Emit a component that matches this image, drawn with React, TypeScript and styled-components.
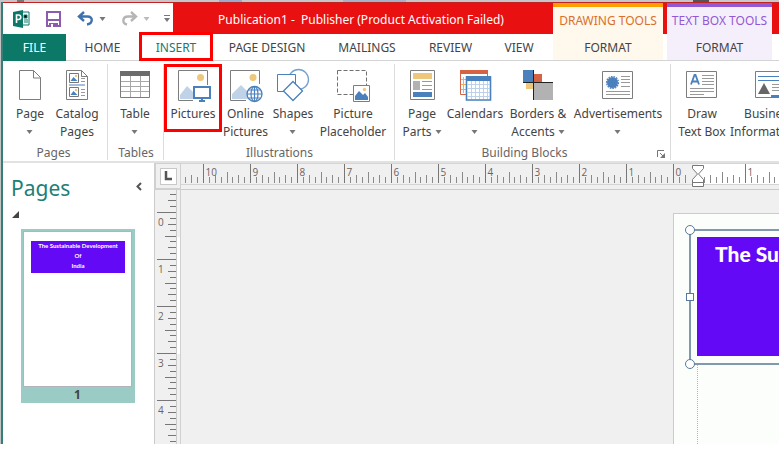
import React from "react";
import styled, { createGlobalStyle, css } from "styled-components";

const GlobalStyle = createGlobalStyle`
  * { box-sizing: border-box; }
  body { margin: 0; background: #fff; overflow: hidden; }
  button { border: 0; padding: 0; background: none; font: inherit; color: inherit; cursor: pointer; }
  svg { display: block; flex: none; }
`;

const Window = styled.div`
  display: flex;
  flex-direction: column;
  height: calc(100vh - 13px);
  margin-right: 2px;
  overflow: hidden;
  color: #444;
  font: 12px/18px "Noto Sans", "Open Sans", sans-serif;
  border-left: 1px solid #c3c3c3;
`;

const DesktopStrip = styled.div`
  flex: none;
  height: 2px;
  background: linear-gradient(90deg, #c6c6c8 0 2%, #777 2% 3%, #c6c6c8 3% 28%, #9aabc9 28% 31%, #c6c6c8 31% 44%, #a6b2c7 44% 52%, #c6c6c8 52% 89%, #555 89% 91%, #c9c9c9 91%);
`;

const Frame = styled.div`
  display: flex;
  flex-direction: column;
  flex: 1;
  min-height: 0;
  border-left: 2px solid #348078;
`;

const Header = styled.header`
  display: flex;
  flex: none;
  height: 59px;
  padding-right: 7px;
  border-bottom: 1px solid #d4d4d4;
  border-top: 1px solid #c32222;
  background: linear-gradient(#e81010 0 31px, #fff 31px);
`;

const HeaderMain = styled.div`
  display: flex;
  flex-direction: column;
  flex: 1;
  min-width: 0;
`;

const TitleBar = styled.div`
  display: flex;
  height: 31px;
`;

const QuickAccess = styled.div`
  display: flex;
  align-items: center;
  flex: none;
  width: 170px;
  padding-left: 9px;
  background: #fff;
`;

const QuickButton = styled.button<{ $w: number }>`
  display: flex;
  align-items: center;
  width: ${(p) => p.$w}px;
`;

const Title = styled.h1`
  flex: 1;
  margin: 0;
  padding: 1px 4px 0 0;
  color: #fff;
  font-size: 12px;
  font-weight: 400;
  line-height: 31px;
  text-align: center;
  white-space: pre;
`;

const Tabs = styled.nav`
  display: flex;
  height: 27px;
`;

const Tab = styled.button<{ $w: number; $kind?: "file" | "active" }>`
  position: relative;
  flex: none;
  width: ${(p) => p.$w}px;
  line-height: 27px;
  white-space: nowrap;
  ${(p) => p.$kind === "file" && css`background: #0b7868; color: #fff;`}
  ${(p) => p.$kind === "active" && css`
    color: #1b7a6d;
    &::after {
      content: "";
      position: absolute;
      inset: -2px 0 0;
      border: 3px solid #fe0000;
    }
  `}
`;

const ContextTabs = styled.div`
  display: flex;
  gap: 4px;
`;

const ContextTab = styled.button<{ $w: number; $accent: string; $bg: string }>`
  display: flex;
  flex-direction: column;
  align-items: center;
  width: ${(p) => p.$w}px;
  border-top: 4px solid ${(p) => p.$accent};
  background: ${(p) => p.$bg};
  line-height: 27px;
  white-space: nowrap;
`;

const ContextName = styled.span<{ $color: string }>`
  height: 27px;
  color: ${(p) => p.$color};
`;

const Ribbon = styled.section`
  display: flex;
  flex: none;
  height: 102px;
  padding-top: 3px;
  background: #fff;
  border-bottom: 2px solid #e2e2e2;
`;

const Group = styled.div<{ $w: number; $pad: number }>`
  position: relative;
  display: flex;
  flex-direction: column;
  justify-content: space-between;
  flex: none;
  width: ${(p) => p.$w}px;
  height: 96px;
  border-right: 1px solid #dcdcdc;
  padding-left: ${(p) => p.$pad}px;
`;

const GroupTools = styled.div`
  display: flex;
`;

const GroupName = styled.div<{ $inset: number }>`
  padding-right: ${(p) => p.$inset}px;
  color: #666;
  text-align: center;
  line-height: 14px;
`;

const Launcher = styled.button`
  position: absolute;
  right: 4px;
  bottom: 1px;
`;

const Tool = styled.button<{ $w: number; $marked?: boolean }>`
  position: relative;
  display: flex;
  flex-direction: column;
  align-items: center;
  flex: none;
  width: ${(p) => p.$w}px;
  padding-top: 5px;
  white-space: nowrap;
  ${(p) => p.$marked && css`
    &::after {
      content: "";
      position: absolute;
      inset: 0 -1px 9px;
      border: 3px solid #fe0000;
    }
  `}
`;

const ToolLabel = styled.span`
  display: flex;
  flex-direction: column;
  align-items: center;
  padding-top: 4px;
  height: 40px;
`;

const ToolLine = styled.span`
  display: flex;
  align-items: center;
  gap: 3px;
  height: 18px;
`;

const Workspace = styled.main`
  display: flex;
  flex: 1;
  min-height: 0;
  background: #f0f0f0;
`;

const PagesPanel = styled.aside`
  flex: none;
  width: 151px;
  background: #fff;
  padding: 11px 0 0 8px;
`;

const PanelHeading = styled.div`
  display: flex;
  justify-content: space-between;
  height: 36px;
  padding-right: 12px;
`;

const PanelTitle = styled.h2`
  margin: 0;
  color: #218073;
  font-size: 21px;
  font-weight: 400;
  line-height: 28px;
`;

const Thumb = styled.button`
  display: flex;
  flex-direction: column;
  width: 114px;
  height: 174px;
  margin: 11px 0 0 10px;
  padding: 2px 3px 0 2px;
  background: #9bcbc5;
`;

const ThumbPage = styled.span`
  display: block;
  width: 100%;
  height: 156px;
  padding: 9px 6px 0 7px;
  border: 1px solid #b1b3bd;
  background: #fff;
`;

const ThumbBanner = styled.span`
  display: block;
  height: 32px;
  background: #6409f5;
  color: #fff;
  font: 700 6px/10px Lato, sans-serif;
  text-align: center;
  white-space: pre-line;
`;

const ThumbNumber = styled.span`
  width: 100%;
  line-height: 16px;
  font-weight: 700;
  text-align: center;
`;

const Editor = styled.div`
  display: grid;
  grid-template: 27px 1fr / 27px 1fr;
  flex: 1;
  min-width: 0;
`;

const Corner = styled.button`
  display: grid;
  place-items: center;
  border: solid #d0d0d0;
  border-width: 1px 1px 2px 2px;
`;

const CornerFace = styled.span`
  display: grid;
  place-items: center;
  width: 17px;
  height: 17px;
  border: 1px solid #c8c8c8;
  background: #fff;
`;

const TopRuler = styled.div`
  overflow: hidden;
  border-bottom: 1px solid #cbcbcb;
`;

const SideRuler = styled.div`
  overflow: hidden;
  border-left: 1px solid #cbcbcb;
  border-right: 1px solid #d0d0d0;
`;

const Canvas = styled.div`
  display: flex;
  justify-content: flex-end;
  padding-top: 23px;
  overflow: hidden;
`;

const Sheet = styled.div`
  flex: none;
  width: 106px;
  padding: 15px 0 0 15px;
  border: solid #cbcbcb;
  border-width: 1px 0 0 1px;
  background: #fbfefa;
`;

const TextFrame = styled.div`
  position: relative;
  height: 136px;
  padding: 6px 0 8px 6px;
  border: 2px solid #8198ad;
  border-right: 0;
`;

const TextBanner = styled.div`
  height: 119px;
  padding: 4px 0 0 18px;
  overflow: hidden;
  background: #6409f5;
  color: #fff;
  font: 900 21px/26px Lato, sans-serif;
  white-space: nowrap;
`;

const Handle = styled.span<{ $top: string; $square?: boolean }>`
  position: absolute;
  left: ${(p) => (p.$square ? -5 : -6)}px;
  top: ${(p) => p.$top};
  width: ${(p) => (p.$square ? 8 : 10)}px;
  height: ${(p) => (p.$square ? 8 : 10)}px;
  border: 1px solid #58799a;
  border-radius: ${(p) => (p.$square ? 0 : 5)}px;
  background: #fff;
`;

const Guide = styled.div`
  height: 100%;
  margin-left: 8px;
  border-left: 1px dotted #8fc0ef;
`;

const Caret = ({ color = "#777" }: { color?: string }) => (
  <svg width="7" height="4" aria-hidden="true"><path d="M0.5 0h6L3.5 4z" fill={color} /></svg>
);

const Icon = ({ children }: { children: React.ReactNode }) => (
  <svg width="32" height="32" viewBox="0 0 32 32" fill="none" overflow="visible" aria-hidden="true">{children}</svg>
);

const grey = "#7d7d7d";
const blue = "#4a80bc";
const pale = "#c0d2e8";
const sun = "#edc87c";

const icons = {
  page: <Icon><path d="M5.500 1.500h14l7 7v22h-21zM19.500 1.500v7.500h7" fill="#fff" stroke={grey} /></Icon>,
  catalog: (
    <Icon>
      <path d="M5.500 1.500h15l6 6v23h-21zM20.500 1.500v6h6" fill="#fff" stroke={grey} />
      <path d="M8.500 4.500h9v9h-9zM8.500 18.500h9v9h-9z" stroke="#777" fill="#fff" />
      <path d="m9.500 12 3-4 4 4zM9.500 26l3-4 4 4z" fill={blue} />
      <circle cx="15" cy="7" r="1.200" fill={sun} /><circle cx="15" cy="21" r="1.200" fill={sun} />
      <path d="M8 16h16" stroke={blue} />
      <path d="M20 9.500h4M20 12.500h4M20 20.500h4M20 23.500h4M20 26.500h4" stroke="#999" />
    </Icon>
  ),
  table: (
    <Icon>
      <path d="M1.500 2.500h29v26h-29z" fill="#fff" stroke={grey} />
      <path d="M1 2h30v5H1z" fill="#6c6c6c" />
      <path d="M2 12.500h28M2 17.500h28M2 22.500h28M11.500 7v21M21.500 7v21" stroke="#a8a8a8" />
    </Icon>
  ),
  pictures: (
    <Icon>
      <path d="M30.500 16V1.500h-29v30H16" stroke={grey} />
      <path d="M3 30v-4l7-9 7 7v6z" fill={pale} />
      <circle cx="23.500" cy="8.500" r="3.500" fill={sun} />
      <path d="M17 18h16v11H17z" fill="#fff" stroke={blue} strokeWidth="2" />
      <path d="M25 29v3M22 32h6" stroke={blue} strokeWidth="2" />
    </Icon>
  ),
  online: (
    <Icon>
      <path d="M29.500 15V1.500h-29v30H16" stroke={grey} />
      <path d="M2 30v-5l9-9 8 8v6z" fill={pale} />
      <circle cx="23" cy="8.500" r="3.500" fill={sun} />
      <circle cx="24.500" cy="25" r="7.500" fill="#fff" stroke={blue} strokeWidth="1.300" />
      <ellipse cx="24.500" cy="25" rx="3.500" ry="7.500" stroke={blue} strokeWidth="1.200" />
      <path d="M24.500 17.500v15M17 25h15M18.500 21h12M18.500 29h12" stroke={blue} strokeWidth="1.200" />
    </Icon>
  ),
  shapes: (
    <Icon>
      <circle cx="21.500" cy="10.500" r="10" stroke="#74a1ce" strokeWidth="1.300" />
      <path d="M.500 5.500h18v17h-18z" fill="#fff" stroke={blue} />
      <path d="m16 12.500 9.500 9.500-9.500 9.500L6.500 22z" fill="#fff" stroke={blue} strokeWidth="1.300" />
    </Icon>
  ),
  placeholder: (
    <Icon>
      <path d="M.500 1.500h29v24h-29z" stroke="#707070" strokeDasharray="4 2" />
      <path d="M16.500 16.500h16v16h-16z" fill="#fff" stroke={grey} />
      <path d="M18 31v-4l4-5 4 4 2-2 3 4v3z" fill={blue} />
      <circle cx="27.500" cy="20.500" r="1.700" fill={sun} />
    </Icon>
  ),
  parts: (
    <Icon>
      <path d="M4.500 1.500h24v29h-24z" fill="#fff" stroke={grey} />
      <path d="M7 4h19v6H7z" fill={sun} />
      <path d="M7 12h7v9H7z" fill="#b2b2b2" />
      <path d="M16 12.500h10M16 16.500h10M16 20.500h10" stroke="#999" />
      <path d="M7 23h19v5H7z" fill={blue} />
    </Icon>
  ),
  calendars: (
    <Icon>
      <path d="M1.500 2v23.500h6M28.500 2v5" stroke="#d66244" />
      <path d="M1 1h28v4H1z" fill="#d66244" />
      <path d="M4.500 8v16M2 10.500h5M2 15.500h5M2 20.500h5" stroke="#e8b060" />
      <path d="M7.500 8h24v23h-24z" fill="#fff" stroke={blue} strokeWidth="1.600" />
      <path d="M7 7h25v5H7z" fill={blue} />
      <path d="M12.500 12v18M16.500 12v18M20.500 12v18M24.500 12v18M28.500 12v18M8 15.500h23M8 19.500h23M8 23.500h23M8 27.500h23" stroke="#bdd2ea" />
    </Icon>
  ),
  borders: (
    <Icon>
      <path d="M1 1h10v12H1z" fill={blue} /><path d="M12 5h8v8h-8z" fill="#d66244" />
      <path d="M4 14h7v6H4z" fill={sun} /><path d="M12 14h19v17H12z" fill="#b2b2b2" />
      <path d="M11.500 1v30M1 13.500h30" stroke="#222" />
    </Icon>
  ),
  ads: (
    <Icon>
      <path d="M.500 2.500h30v27h-30z" fill="#fff" stroke={grey} />
      <circle cx="10.500" cy="13.500" r="5.500" fill={blue} />
      <circle cx="10.500" cy="13.500" r="6" stroke={blue} strokeWidth="1.200" strokeDasharray="1.600 1" />
      <path d="M19 7.500h9M19 10.500h9M19 13.500h9M19 17.500h9M4 22.500h24M4 25.500h24" stroke="#999" />
    </Icon>
  ),
  textBox: (
    <Icon>
      <path d="M.500 2.500h30v26h-30z" fill="#fff" stroke={grey} />
      <path d="m5 15.500 3.500-9.500h1l3.500 9.500M6.500 12.500h5" stroke={blue} strokeWidth="1.800" />
      <path d="M16 6.500h12M16 9.500h12M16 12.500h12M16 15.500h12M4 19.500h24M4 22.500h24M4 25.500h14" stroke="#999" />
    </Icon>
  ),
  business: (
    <Icon>
      <path d="M2.500 2.500h29v26h-29z" fill="#fff" stroke={grey} />
      <path d="M5 7.500h26M5 11.500h26" stroke={blue} />
      <path d="m5 25 6-11 6 11z" fill="#666" />
      <path d="M19 15.500h12M19 18.500h12M19 21.500h12" stroke="#999" />
      <path d="M18 26h14v3H18z" fill={blue} />
    </Icon>
  ),
};

type ToolSpec = { icon: keyof typeof icons; lines: string[]; w: number; caret?: boolean; marked?: boolean };
type GroupSpec = { name: string; w: number; pad: number; inset: number; tools: ToolSpec[]; launcher?: boolean };

const groups: GroupSpec[] = [
  { name: "Pages", w: 105, pad: 5, inset: 8, tools: [
    { icon: "page", lines: ["Page", ""], w: 44, caret: true },
    { icon: "catalog", lines: ["Catalog", "Pages"], w: 50 },
  ] },
  { name: "Tables", w: 56, pad: 1, inset: 0, tools: [{ icon: "table", lines: ["Table", ""], w: 52, caret: true }] },
  { name: "Illustrations", w: 231, pad: 1, inset: 0, tools: [
    { icon: "pictures", lines: ["Pictures"], w: 56, marked: true },
    { icon: "online", lines: ["Online", "Pictures"], w: 49 },
    { icon: "shapes", lines: ["Shapes", ""], w: 46, caret: true },
    { icon: "placeholder", lines: ["Picture", "Placeholder"], w: 74 },
  ] },
  { name: "Building Blocks", w: 276, pad: 4, inset: 20, launcher: true, tools: [
    { icon: "parts", lines: ["Page", "Parts"], w: 46, caret: true },
    { icon: "calendars", lines: ["Calendars", ""], w: 60, caret: true },
    { icon: "borders", lines: ["Borders &", "Accents"], w: 66, caret: true },
    { icon: "ads", lines: ["Advertisements", ""], w: 94, caret: true },
  ] },
  { name: "", w: 240, pad: 4, inset: 0, tools: [
    { icon: "textBox", lines: ["Draw", "Text Box"], w: 54 },
    { icon: "business", lines: ["Business", "Information"], w: 80, caret: true },
  ] },
];

const tabs: { name: string; w: number; kind?: "file" | "active" }[] = [
  { name: "FILE", w: 63, kind: "file" },
  { name: "HOME", w: 73 },
  { name: "INSERT", w: 74, kind: "active" },
  { name: "PAGE DESIGN", w: 108 },
  { name: "MAILINGS", w: 92 },
  { name: "REVIEW", w: 75 },
  { name: "VIEW", w: 62 },
];

const INCH = 47;

/* Eighth-inch marks counted from an origin, each with its length. */
function marks(origin: number, from: number, to: number) {
  const out: { at: number; len: number; inch: number | null }[] = [];
  for (let i = Math.ceil(((from - origin) * 8) / INCH); origin + (i * INCH) / 8 <= to; i++) {
    const whole = i % 8 === 0;
    out.push({
      at: Math.round(origin + (i * INCH) / 8) + 0.5,
      len: whole ? 19 : i % 4 === 0 ? 11 : i % 2 === 0 ? 8 : 6,
      inch: whole ? Math.abs(i / 8) : null,
    });
  }
  return out;
}

const HorizontalRuler = () => (
  <svg width="100%" height="26" fontFamily="Open Sans, sans-serif" fontSize="10" aria-label="Horizontal ruler">
    <path d="M517 1h400v20H517z" fill="#fff" />
    <path d="M0 .500h1000M0 21.500h1000" stroke="#d5d5d5" />
    {[...marks(492, 3, 507), ...marks(517, 522, 600)].map((m) => (
      <g key={m.at}>
        <path d={`M${m.at} 20v${-m.len}`} stroke={m.inch === null ? "#8a8a8a" : "#777"} />
        {m.inch !== null && <text x={m.at + 2} y="13" fill="#6f625e">{m.inch}</text>}
      </g>
    ))}
    <path d="M511.500 2.500h11v3l-5 5.500 5 5.500v7h-11v-7l5-5.500-5-5.500zM511.500 19.500h11" fill="#fff" stroke="#777" />
  </svg>
);

const VerticalRuler = () => (
  <svg width="26" height="100%" fontFamily="Open Sans, sans-serif" fontSize="10" aria-label="Vertical ruler">
    <path d="M22 47h4v117h-4z" fill="#fff" />
    <path d="M21.500 0v1000" stroke="#cbcbcb" />
    {marks(22, 3, 255).map((m) => (
      <g key={m.at}>
        <path d={`M21 ${m.at}h${-m.len}`} stroke="#777" />
        {m.inch !== null && <text x="3" y={m.at + 13} fill="#6f625e">{m.inch}</text>}
      </g>
    ))}
  </svg>
);

export default function App() {
  return (
    <>
      <GlobalStyle />
      <Window>
        <DesktopStrip />
        <Frame>
          <Header>
            <HeaderMain>
              <TitleBar>
                <QuickAccess>
                  <QuickButton $w={34} aria-label="Publisher">
                    <svg width="20" height="18">
                      <path d="M10 2h7v13h-7z" fill="#fff" stroke="#0b7868" />
                      <path d="M12 5h3v3h-3zM12 10h4M12 12h4" stroke="#0b7868" />
                      <path d="M1 2 11 0v18L1 16z" fill="#0b7868" />
                      <path d="M4.500 13V5h2a2 2 0 0 1 0 4.500h-2" stroke="#fff" strokeWidth="1.600" fill="none" />
                    </svg>
                  </QuickButton>
                  <QuickButton $w={31} aria-label="Save">
                    <svg width="15" height="16" fill="none">
                      <path d="M1 1h13v14H1z" stroke="#8d5bae" strokeWidth="2" />
                      <path d="M1 8h13v2H1zM3 12h9v4H3z" fill="#8d5bae" /><path d="M5 13h2v3H5z" fill="#fff" />
                    </svg>
                  </QuickButton>
                  <QuickButton $w={22} aria-label="Undo">
                    <svg width="17" height="15" fill="none" stroke="#3e72ae" strokeWidth="2.400">
                      <path d="M7 1 2 5.500 7 10M2 5.500h8.500c6 0 5.500 7-.500 8" />
                    </svg>
                  </QuickButton>
                  <QuickButton $w={22} aria-label="Undo list"><Caret /></QuickButton>
                  <QuickButton $w={22} aria-label="Redo">
                    <svg width="17" height="15" fill="none" stroke="#b5b5b5" strokeWidth="2.400">
                      <path d="m10 1 5 4.500-5 4.500M15 5.500H7c-6 0-6 7-1 8" />
                    </svg>
                  </QuickButton>
                  <QuickButton $w={20} aria-label="Redo list"><Caret color="#bbb" /></QuickButton>
                  <QuickButton $w={7} aria-label="Customize">
                    <svg width="7" height="8"><path d="M1 .500h6" stroke="#777" /><path d="M1 3h6L4 7z" fill="#777" /></svg>
                  </QuickButton>
                </QuickAccess>
                <Title>{"Publication1 -  Publisher (Product Activation Failed)"}</Title>
              </TitleBar>
              <Tabs>
                {tabs.map((t) => <Tab key={t.name} $w={t.w} $kind={t.kind}>{t.name}</Tab>)}
              </Tabs>
            </HeaderMain>
            <ContextTabs>
              <ContextTab $w={110} $accent="#ff9c00" $bg="#fff8ec">
                <ContextName $color="#d9702a">DRAWING TOOLS</ContextName>FORMAT
              </ContextTab>
              <ContextTab $w={105} $accent="#9359d4" $bg="#f5effc">
                <ContextName $color="#9359d4">TEXT BOX TOOLS</ContextName>FORMAT
              </ContextTab>
            </ContextTabs>
          </Header>
          <Ribbon>
            {groups.map((g) => (
              <Group key={g.name} $w={g.w} $pad={g.pad}>
                <GroupTools>
                  {g.tools.map((t) => (
                    <Tool key={t.icon} $w={t.w} $marked={t.marked}>
                      {icons[t.icon]}
                      <ToolLabel>
                        {t.lines.map((line, i) => (
                          <ToolLine key={i}>{line}{t.caret && i === 1 && <Caret />}</ToolLine>
                        ))}
                      </ToolLabel>
                    </Tool>
                  ))}
                </GroupTools>
                <GroupName $inset={g.inset}>{g.name}</GroupName>
                {g.launcher && (
                  <Launcher aria-label="Building Blocks options">
                    <svg width="9" height="9" fill="none" stroke="#777"><path d="M.500 7V.500H7M3 3l4 4" /><path d="M8 3v5H3z" fill="#777" stroke="none" /></svg>
                  </Launcher>
                )}
              </Group>
            ))}
          </Ribbon>
          <Workspace>
            <PagesPanel>
              <PanelHeading>
                <PanelTitle>Pages</PanelTitle>
                <button aria-label="Collapse pages">
                  <svg width="6" height="20" fill="none" stroke="#555" strokeWidth="2"><path d="M5 1 1.500 4.500 5 8" /></svg>
                </button>
              </PanelHeading>
              <svg width="8" height="8"><path d="M8 1v7H1z" fill="#444" /></svg>
              <Thumb aria-label="Page 1">
                <ThumbPage>
                  <ThumbBanner>{"The Sustainable Development\nOf\nIndia"}</ThumbBanner>
                </ThumbPage>
                <ThumbNumber>1</ThumbNumber>
              </Thumb>
            </PagesPanel>
            <Editor>
              <Corner aria-label="Tab stop">
                <CornerFace>
                  <svg width="9" height="10" fill="none" stroke="#555" strokeWidth="2.500"><path d="M2 0v8h6" /></svg>
                </CornerFace>
              </Corner>
              <TopRuler><HorizontalRuler /></TopRuler>
              <SideRuler><VerticalRuler /></SideRuler>
              <Canvas>
                <Sheet>
                  <TextFrame>
                    <TextBanner>The Sustainable</TextBanner>
                    <Handle $top="-6px" />
                    <Handle $top="62px" $square />
                    <Handle $top="128px" />
                  </TextFrame>
                  <Guide />
                </Sheet>
              </Canvas>
            </Editor>
          </Workspace>
        </Frame>
      </Window>
    </>
  );
}
